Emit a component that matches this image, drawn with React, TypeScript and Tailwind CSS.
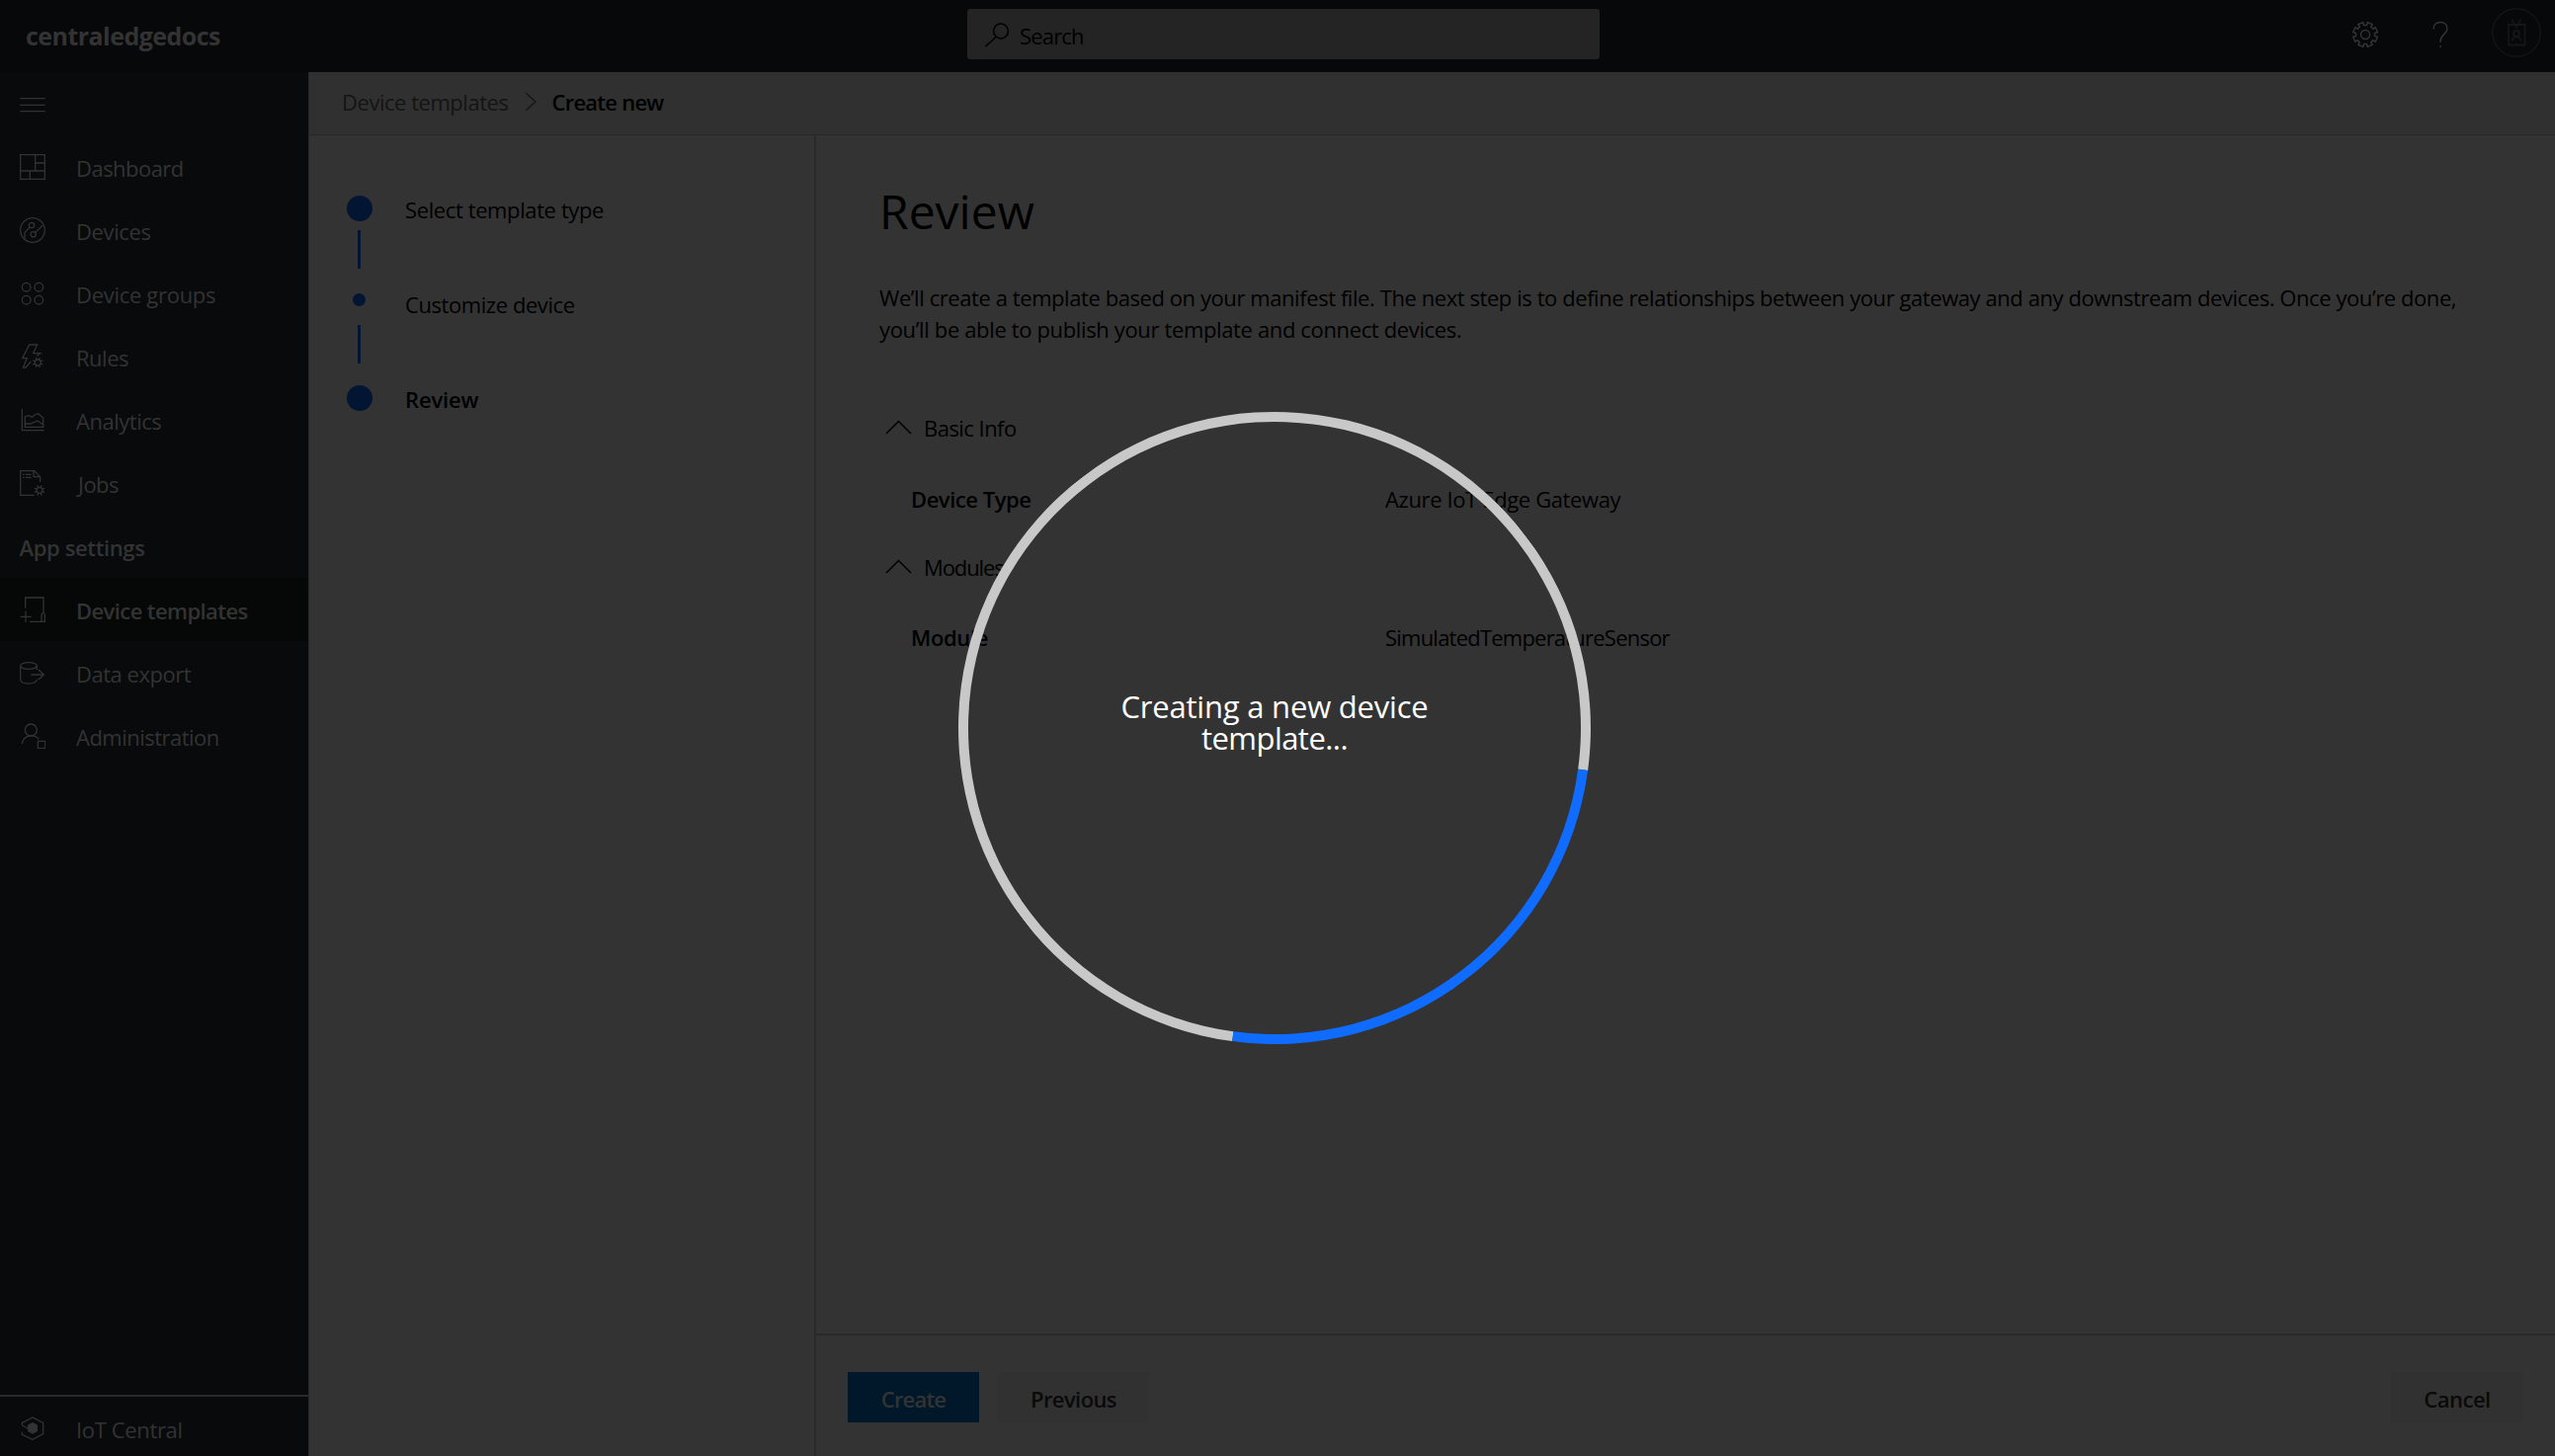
import React from "react";

function Icon({ children }: { children: React.ReactNode }) {
  return (
    <svg viewBox="0 0 78 78" className="size-[26px] shrink-0" fill="none" stroke="currentColor" strokeWidth={3.8}>
      {children}
    </svg>
  );
}

function MiniGear({ x, y }: { x: number; y: number }) {
  return (
    <g transform={`translate(${x} ${y})`}>
      <circle r={9} />
      {[0, 45, 90, 135, 180, 225, 270, 315].map((a) => (
        <path key={a} d="M0 -10V-16.500" transform={`rotate(${a + 22.5})`} />
      ))}
    </g>
  );
}

const icons = {
  dashboard: (
    <Icon>
      <path d="M2 2H76V76H2ZM47 2V51M2 51H76M47 27H76M31 51V76" />
    </Icon>
  ),
  devices: (
    <Icon>
      <circle cx={39} cy={39} r={37} />
      <circle cx={36} cy={24} r={8} />
      <circle cx={41} cy={52} r={8} />
      <path d="M30 30L15 47V66M47 46L70 24" />
    </Icon>
  ),
  groups: (
    <Icon>
      <circle cx={20} cy={20} r={13} />
      <circle cx={58} cy={20} r={13} />
      <circle cx={20} cy={59} r={13} />
      <circle cx={58} cy={59} r={13} />
    </Icon>
  ),
  rules: (
    <Icon>
      <path d="M34 54L18 72H10L22 44H8L29 3H53L41 29H63L52 37" />
      <MiniGear x={55} y={57} />
    </Icon>
  ),
  analytics: (
    <Icon>
      <path d="M7 6V71H74M16 61V29L27 26L37 31L46 24L56 20L71 33V61ZM16 51H32L54 42L71 54" />
    </Icon>
  ),
  jobs: (
    <Icon>
      <path d="M44 76H2V2H44L62 20V36M42 2V20H62M9 13H14M9 22H14M18 13H35M18 22H35" />
      <MiniGear x={60} y={61} />
    </Icon>
  ),
  templates: (
    <Icon>
      <path d="M17 35V3H72V48M30 76H76V55Q71 42 66 55V76M2 61H35M18 44V78" />
    </Icon>
  ),
  dataExport: (
    <Icon>
      <ellipse cx={27} cy={18} rx={25} ry={10} />
      <path d="M2 18V60C4 76 48 77 53 59M52 18V30M34 45H73M57 30L73 45L57 60" />
    </Icon>
  ),
  admin: (
    <Icon>
      <circle cx={34} cy={21} r={18} />
      <path d="M7 63C10 36 43 32 58 49M55 55H77V77H55Z" />
    </Icon>
  ),
};

function NavItem({ icon, label, spacing, active }: { icon: React.ReactNode; label: string; spacing: string; active?: boolean }) {
  return (
    <div className={`flex h-16 items-center pl-[19.5px] ${active ? "bg-[#060807] font-semibold" : ""}`}>
      {icon}
      <span className={`ml-[31.5px] pt-[3px] whitespace-nowrap ${spacing}`}>{label}</span>
    </div>
  );
}

function Step({ label, spacing, small, last }: { label: string; spacing: string; small?: boolean; last?: boolean }) {
  return (
    <div className="flex h-24 items-start">
      <div className="flex w-[26px] flex-col items-center">
        <div className="h-[35px]">
          <div className={`rounded-full bg-[#021533] ${small ? "mt-[3px] size-[13px]" : "size-[26px]"}`} />
        </div>
        {!last && <div className="h-[39px] w-[3px] bg-[#021533]" />}
      </div>
      <span className={`-mt-[2px] ml-[33.5px] leading-8 ${last ? "font-semibold" : ""} ${spacing}`}>{label}</span>
    </div>
  );
}

function SectionTitle({ label, spacing }: { label: string; spacing: string }) {
  return (
    <div className="flex h-8 items-center">
      <svg className="-mt-px ml-[6px] h-[15px] w-[27px]" viewBox="0 0 27 15" fill="none" stroke="#000" strokeWidth={1.5}>
        <path d="M1 14L13.500 1.500L26 14" />
      </svg>
      <span className={`ml-[12px] leading-8 ${spacing}`}>{label}</span>
    </div>
  );
}

function Field({ name, value, nameSpacing, valueSpacing }: { name: string; value: string; nameSpacing: string; valueSpacing: string }) {
  return (
    <div className="flex h-8 pl-8 leading-8">
      <span className={`w-[480px] font-semibold ${nameSpacing}`}>{name}</span>
      <span className={valueSpacing}>{value}</span>
    </div>
  );
}

function gearPath() {
  const pts: string[] = [];
  for (let i = 0; i < 8; i++) {
    const base = (i * Math.PI) / 4 + Math.PI / 8;
    const corners: [number, number][] = [
      [-0.24, 9.6],
      [-0.22, 12.6],
      [0.22, 12.6],
      [0.24, 9.6],
    ];
    corners.forEach(([a, r]) => {
      pts.push(`${(13 + r * Math.sin(base + a)).toFixed(2)} ${(13 - r * Math.cos(base + a)).toFixed(2)}`);
    });
  }
  return "M" + pts.join("L") + "Z";
}

export default function App() {
  return (
    <div className="relative flex h-[1474px] w-[2586px] flex-col overflow-hidden bg-[#333333] font-['Open_Sans','Noto_Sans',sans-serif] text-[22px] text-black">
      <header className="flex h-[73px] shrink-0 items-start bg-[#07080a] text-[#333333]">
        <div className="w-[979px] pt-[19px] pl-[26px] text-[25px] leading-[34px] font-bold tracking-[-0.54px]">centraledgedocs</div>
        <div className="mt-[9px] flex h-[51px] w-[640px] items-center rounded-[3px] bg-[#242424] text-black">
          <svg className="ml-[17px] h-[26px] w-[26px]" viewBox="0 0 26 26" fill="none" stroke="#000" strokeWidth={1.5}>
            <circle cx={17} cy={9.5} r={7.4} />
            <path d="M12 15.500L1.500 25" />
          </svg>
          <span className="ml-[10px] pt-[3px] tracking-[-0.83px]">Search</span>
        </div>
        <svg className="mt-[22px] ml-[762px] size-[26px]" viewBox="0 0 26 26" fill="none" stroke="#333333" strokeWidth={1.5} strokeLinejoin="round">
          <path d={gearPath()} />
          <circle cx={13} cy={13} r={4.5} />
        </svg>
        <svg className="mt-[21px] ml-[55px] h-[28px] w-[16px]" viewBox="0 0 16 28" fill="none" stroke="#363636" strokeWidth={1.4}>
          <path d="M1 8.500C1 4 4 1.500 8 1.500S15 4 15 8C15 13.500 8 14 8 20.500V22M8 25V27" />
        </svg>
        <svg className="mt-[8px] ml-[44px] size-[50px]" viewBox="0 0 50 50" fill="none" stroke="#161616" strokeWidth={1.3}>
          <circle cx={25} cy={25} r={24.2} />
          <g strokeWidth={1.8}>
            <path d="M17 17H33.500V37.500H17ZM20 11.500L25 19.500M29.500 11.500L24 20.500" />
            <circle cx={25} cy={26} r={3} />
            <path d="M20.500 33.500C21 28 29 28 29.500 33.500" />
          </g>
        </svg>
      </header>

      <div className="flex min-h-0 flex-1">
        <nav className="flex w-[313px] shrink-0 flex-col border-r border-[#282828] bg-[#090a0c] text-[#333333]">
          <div className="flex h-16 items-center pt-px pl-[19.5px]">
            <Icon>
              <path d="M1 20H77M1 40H77M1 59H77" />
            </Icon>
          </div>
          <NavItem icon={icons.dashboard} label="Dashboard" spacing="tracking-[-0.53px]" />
          <NavItem icon={icons.devices} label="Devices" spacing="tracking-[-0.38px]" />
          <NavItem icon={icons.groups} label="Device groups" spacing="tracking-[-0.3px]" />
          <NavItem icon={icons.rules} label="Rules" spacing="tracking-[-0.49px]" />
          <NavItem icon={icons.analytics} label="Analytics" spacing="tracking-[-0.48px]" />
          <NavItem icon={icons.jobs} label="Jobs" spacing="pl-[2px] tracking-[-0.53px]" />
          <div className="flex h-16 items-center pt-[3px] pl-[19.5px] font-semibold tracking-[-0.37px]">App settings</div>
          <NavItem icon={icons.templates} label="Device templates" spacing="tracking-[-0.59px]" active />
          <NavItem icon={icons.dataExport} label="Data export" spacing="tracking-[-0.48px]" />
          <NavItem icon={icons.admin} label="Administration" spacing="tracking-[-0.52px]" />
          <div className="mt-auto flex h-[62px] items-center border-t-2 border-[#2a2a2a] pt-[4px] pl-[19.5px]">
            <Icon>
              <path d="M7 50V58L39 73L71 56V22L39 6L7 22V29L24 40" />
              <path d="M39 23L52 30V47L39 54L26 47V30Z" fill="currentColor" />
            </Icon>
            <span className="ml-[31.5px] pt-[3px] tracking-[-0.35px]">IoT Central</span>
          </div>
        </nav>

        <div className="flex min-w-0 flex-1 flex-col">
          <div className="flex h-16 shrink-0 items-center border-b border-[#272727] bg-[#303030] pb-[3px] pl-[33px]">
            <span className="tracking-[-0.47px] text-[#141414]">Device templates</span>
            <svg className="ml-[17px] h-[20px] w-[12px]" viewBox="0 0 12 20" fill="none" stroke="#141414" strokeWidth={1.3}>
              <path d="M1 1L11 10L1 19" />
            </svg>
            <span className="ml-[15px] font-semibold tracking-[-0.75px]">Create new</span>
          </div>

          <div className="flex min-h-0 flex-1">
            <aside className="w-[513px] shrink-0 border-r-2 border-[#292929] pt-[61px] pl-[37.5px]">
              <Step label="Select template type" spacing="tracking-[-0.39px]" />
              <Step label="Customize device" spacing="tracking-[-0.43px]" small />
              <Step label="Review" spacing="tracking-[-0.16px]" last />
            </aside>

            <section className="flex min-w-0 flex-1 flex-col">
              <div className="flex-1 pt-[45px] pl-[64px]">
                <h1 className="text-[48px] leading-[64px]">Review</h1>
                <p className="mt-[39px] leading-8 whitespace-nowrap">
                  <span className="block tracking-[-0.426px]">
                    We’ll create a template based on your manifest file. The next step is to define relationships between your gateway and any downstream devices. Once you’re done,
                  </span>
                  <span className="block tracking-[-0.36px]">you’ll be able to publish your template and connect devices.</span>
                </p>
                <div className="mt-[68px] flex flex-col">
                  <SectionTitle label="Basic Info" spacing="tracking-[-0.53px]" />
                  <div className="mt-10">
                    <Field name="Device Type" value="Azure IoT Edge Gateway" nameSpacing="tracking-[-0.47px]" valueSpacing="tracking-[-0.37px]" />
                  </div>
                  <div className="mt-[37px]">
                    <SectionTitle label="Modules" spacing="tracking-[-1.1px]" />
                  </div>
                  <div className="mt-[39px]">
                    <Field name="Module" value="SimulatedTemperatureSensor" nameSpacing="tracking-[-0.36px]" valueSpacing="tracking-[-0.78px]" />
                  </div>
                </div>
              </div>

              <footer className="flex h-[124px] shrink-0 items-start border-t-2 border-[#292929] pt-[37px] pr-8 pl-8">
                <button className="h-[51px] w-[133px] bg-[#00182a] pt-[3px] font-semibold tracking-[-0.8px] text-[#333333]">Create</button>
                <button className="ml-[19px] h-[51px] w-[153px] bg-[#313131] pt-[3px] font-semibold tracking-[-0.6px] text-[#0a0a0a]">Previous</button>
                <button className="ml-auto h-[51px] w-[134px] bg-[#313131] pt-[3px] font-semibold tracking-[-0.5px] text-[#0a0a0a]">Cancel</button>
              </footer>
            </section>
          </div>
        </div>
      </div>

      <div className="absolute top-[417px] left-[970px] flex size-[640px] items-center justify-center">
        <div className="absolute inset-0 rotate-[52.7deg] rounded-full border-[10px] border-[#c8c8c8] border-r-[#0f6cff]" />
        <p className="relative -mt-[12px] text-center text-[31px] leading-8 tracking-[-0.2px] text-white">
          Creating a new device
          <br />
          <span className="tracking-[-0.54px]">template...</span>
        </p>
      </div>
    </div>
  );
}
